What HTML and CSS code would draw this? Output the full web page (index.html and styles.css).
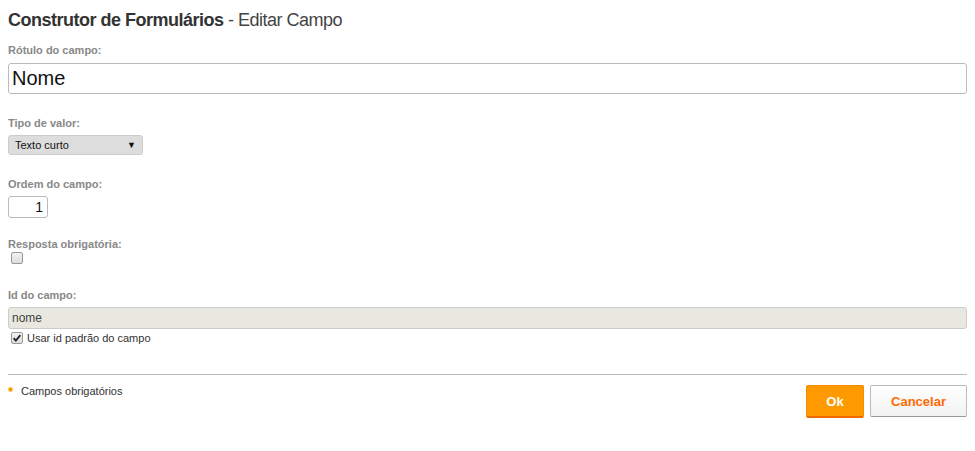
FILE: index.html
```html
<!DOCTYPE html>
<html lang="pt">
<head>
<meta charset="utf-8">
<link rel="stylesheet" href="styles.css">
</head>
<body>
<div class="page">
  <h1 class="title"><b>Construtor de Formulários</b> - Editar Campo</h1>

  <div class="field f-label">
    <div class="lbl">Rótulo do campo:</div>
    <div class="input big">Nome</div>
  </div>

  <div class="field f-type">
    <div class="lbl">Tipo de valor:</div>
    <div class="select"><span>Texto curto</span><span class="arrow">▼</span></div>
  </div>

  <div class="field f-order">
    <div class="lbl">Ordem do campo:</div>
    <div class="num">1</div>
  </div>

  <div class="field f-req">
    <div class="lbl">Resposta obrigatória:</div>
    <div class="cb"></div>
  </div>

  <div class="field f-id">
    <div class="lbl">Id do campo:</div>
    <div class="input idbox">nome</div>
    <div class="cbrow">
      <div class="cb checked">
        <svg viewBox="0 0 12 12" width="10" height="10"><path d="M2 6.2 L4.6 9 L10 2.6" fill="none" stroke="#222" stroke-width="2.2"/></svg>
      </div>
      <span>Usar id padrão do campo</span>
    </div>
  </div>

  <div class="footer">
    <div class="req-note"><span class="star"><svg viewBox="0 0 6 6" width="5" height="5"><circle cx="3" cy="3" r="2.6" fill="#f8b400"/><path d="M3 0 V6 M0 3 H6 M0.8 0.8 L5.2 5.2 M5.2 0.8 L0.8 5.2" stroke="#f39a00" stroke-width="0.8"/></svg></span>Campos obrigatórios</div>
    <div class="buttons">
      <button class="btn ok">Ok</button>
      <button class="btn cancel">Cancelar</button>
    </div>
  </div>
</div>
</body>
</html>
```

FILE: styles.css
```css
html, body { margin: 0; padding: 0; background: #fff; }
body { padding: 8px; font-family: "Liberation Sans", Arial, sans-serif; color: #333; }
.page { width: 959px; display: flex; flex-direction: column; }

.title {
  margin: 0; font-size: 18px; line-height: 24px; font-weight: normal;
  color: #444; letter-spacing: -0.5px;
}
.title b { font-weight: bold; color: #333; }

.lbl { font-size: 11px; line-height: 14px; font-weight: bold; color: #888; }

.f-label { margin-top: 11px; }
.f-label .lbl { margin-bottom: 6px; }
.input {
  box-sizing: border-box; width: 959px; border: 1px solid #bbb; border-radius: 3px;
  background: #fff;
}
.big { height: 31px; font-size: 20px; line-height: 29px; padding-left: 3px; color: #111; }

.f-type { margin-top: 22px; }
.f-type .lbl { margin-bottom: 5px; }
.select {
  box-sizing: border-box; width: 135px; height: 20px; background: #ddd;
  border: 1px solid #ccc; border-radius: 3px; display: flex; justify-content: space-between;
  align-items: center; padding: 0 6px 0 6px; font-size: 11px; color: #111;
}
.arrow { font-size: 9px; }

.f-order { margin-top: 22px; }
.f-order .lbl { margin-bottom: 5px; }
.num {
  box-sizing: border-box; width: 40px; height: 22px; border: 1px solid #bbb; border-radius: 3px;
  text-align: right; padding-right: 4px; font-size: 14px; line-height: 20px; color: #111;
}

.f-req { margin-top: 19px; }
.f-req .lbl { margin-bottom: 1px; }
.cb {
  box-sizing: border-box; width: 12px; height: 12px; margin-left: 3px;
  border: 1px solid #999; border-radius: 2px; background: linear-gradient(#f2f2f2, #dcdcdc);
  display: flex; align-items: center; justify-content: center;
}

.f-id { margin-top: 24px; }
.f-id .lbl { margin-bottom: 5px; }
.idbox { height: 22px; background: #e9e8e0; border-color: #ccc; font-size: 12px; line-height: 20px; padding-left: 3px; color: #444; }
.cbrow { display: flex; align-items: center; gap: 4px; margin-top: 3px; font-size: 11px; color: #333; }
.cbrow .cb { margin-left: 3px; }

.footer {
  margin-top: 30px; border-top: 1px solid #bbb; display: flex; justify-content: space-between;
  align-items: flex-start; padding-top: 10px;
}
.req-note { font-size: 11px; color: #333; margin-top: 0; display: flex; align-items: center; }
.star { width: 13px; display: flex; align-items: center; padding-left: 0; height: 10px; margin-top: -4px; }
.buttons { display: flex; gap: 6px; }
.btn {
  font-family: "Liberation Sans", Arial, sans-serif; font-size: 13px; font-weight: bold;
  box-sizing: border-box; height: 32px; border-radius: 2px; cursor: pointer; padding: 0;
}
.ok { width: 58px; background: #ff9900; color: #fff; border: 1px solid #f48c00; border-bottom: 2px solid #f06a00; height: 33px; }
.cancel { width: 97px; background: linear-gradient(#fff, #f2f2f2); color: #ff6a00; border: 1px solid #bbb; border-bottom-color: #999; }
```
